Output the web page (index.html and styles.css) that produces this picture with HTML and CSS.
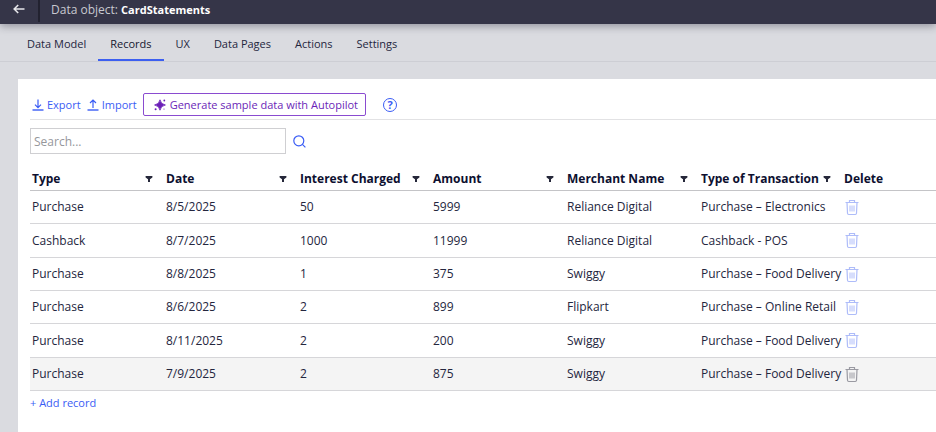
FILE: index.html
```html
<!DOCTYPE html>
<html lang="en">
<head>
<meta charset="utf-8">
<meta name="viewport" content="width=device-width, initial-scale=1">
<title>Data object: CardStatements</title>
<link rel="stylesheet" href="styles.css">
</head>
<body>
<svg class="sprite" aria-hidden="true">
  <symbol id="funnel" viewBox="0 0 8 8"><path d="M0.6 1h6.8v1.4L5 4.2V7H3V4.2L0.6 2.4z" fill="currentColor"/></symbol>
  <symbol id="trash" viewBox="0 0 14 17"><g fill="none" stroke="currentColor"><path d="M0.5 3.5h13M4.5 3V1.5h5V3M2 3.5l0.5 10.8q0.1 1.2 1.2 1.2h6.6q1.1 0 1.2-1.2L12 3.5" stroke-width="1.2"/><path d="M5 6.5v6M7 6.5v6M9 6.5v6" stroke-width="1"/></g></symbol>
</svg>

<header class="topbar">
  <button class="back" type="button" aria-label="Back">
    <svg width="12" height="10" viewBox="0 0 12 10"><path d="M11.5 5H1.2M5.2 1L1.2 5l4 4" fill="none" stroke="currentColor" stroke-width="1.6"/></svg>
  </button>
  <h1 class="title">Data object: <strong>CardStatements</strong></h1>
</header>

<nav class="tabs">
  <a class="tab" href="#model">Data Model</a>
  <a class="tab active" href="#records" aria-current="page">Records</a>
  <a class="tab" href="#ux">UX</a>
  <a class="tab" href="#pages">Data Pages</a>
  <a class="tab" href="#actions">Actions</a>
  <a class="tab" href="#settings">Settings</a>
</nav>

<main class="panel">
  <div class="toolbar">
    <button class="link" type="button"><svg width="12" height="12" viewBox="0 0 12 12" fill="none" stroke="currentColor"><path d="M6 0.5v8M3 5.6l3 3 3-3" stroke-width="1.2"/><path d="M0.5 11h11" stroke-width="1.4"/></svg>Export</button>
    <button class="link" type="button"><svg width="12" height="12" viewBox="0 0 12 12" fill="none" stroke="currentColor"><path d="M6 9V1M3 4l3-3 3 3" stroke-width="1.2"/><path d="M0.5 11h11" stroke-width="1.4"/></svg>Import</button>
    <button class="autopilot" type="button"><svg width="12" height="12" viewBox="0 0 12 12" fill="currentColor"><path d="M6 0.8Q6.7 5.3 11.4 6Q6.7 6.7 6 11.2Q5.3 6.7 0.6 6Q5.3 5.3 6 0.8z" stroke="currentColor" stroke-width="0.8"/><circle cx="10.3" cy="1.5" r="0.9"/><circle cx="1.6" cy="10.2" r="1"/><circle cx="10" cy="10" r="0.6"/></svg>Generate sample data with Autopilot</button>
    <button class="help" type="button" aria-label="Help">?</button>
  </div>

  <form class="search">
    <input class="search-box" type="text" placeholder="Search..." aria-label="Search">
    <button class="link" type="submit" aria-label="Search"><svg width="13" height="13" viewBox="0 0 13 13" fill="none" stroke="currentColor" stroke-width="1.2"><circle cx="5.8" cy="5.8" r="5"/><path d="M9.4 9.4l3 3"/></svg></button>
  </form>

  <table class="records">
    <colgroup><col class="std"><col class="std"><col class="mid"><col class="std"><col class="std"><col class="wide"><col></colgroup>
    <thead>
      <tr>
        <th scope="col"><div class="head">Type<svg class="funnel"><use href="#funnel"/></svg></div></th>
        <th scope="col"><div class="head">Date<svg class="funnel"><use href="#funnel"/></svg></div></th>
        <th scope="col"><div class="head">Interest Charged<svg class="funnel"><use href="#funnel"/></svg></div></th>
        <th scope="col"><div class="head">Amount<svg class="funnel"><use href="#funnel"/></svg></div></th>
        <th scope="col"><div class="head">Merchant Name<svg class="funnel"><use href="#funnel"/></svg></div></th>
        <th scope="col"><div class="head">Type of Transaction<svg class="funnel"><use href="#funnel"/></svg></div></th>
        <th scope="col">Delete</th>
      </tr>
    </thead>
    <tbody>
      <tr><td>Purchase</td><td>8/5/2025</td><td>50</td><td>5999</td><td>Reliance Digital</td><td>Purchase – Electronics</td><td><button class="delete" type="button" aria-label="Delete"><svg><use href="#trash"/></svg></button></td></tr>
      <tr><td>Cashback</td><td>8/7/2025</td><td>1000</td><td>11999</td><td>Reliance Digital</td><td>Cashback - POS</td><td><button class="delete" type="button" aria-label="Delete"><svg><use href="#trash"/></svg></button></td></tr>
      <tr><td>Purchase</td><td>8/8/2025</td><td>1</td><td>375</td><td>Swiggy</td><td>Purchase – Food Delivery</td><td><button class="delete" type="button" aria-label="Delete"><svg><use href="#trash"/></svg></button></td></tr>
      <tr><td>Purchase</td><td>8/6/2025</td><td>2</td><td>899</td><td>Flipkart</td><td>Purchase – Online Retail</td><td><button class="delete" type="button" aria-label="Delete"><svg><use href="#trash"/></svg></button></td></tr>
      <tr><td>Purchase</td><td>8/11/2025</td><td>2</td><td>200</td><td>Swiggy</td><td>Purchase – Food Delivery</td><td><button class="delete" type="button" aria-label="Delete"><svg><use href="#trash"/></svg></button></td></tr>
      <tr class="current"><td>Purchase</td><td>7/9/2025</td><td>2</td><td>875</td><td>Swiggy</td><td>Purchase – Food Delivery</td><td><button class="delete" type="button" aria-label="Delete"><svg><use href="#trash"/></svg></button></td></tr>
    </tbody>
  </table>
  <button class="link add" type="button">+ Add record</button>
</main>
</body>
</html>
```
FILE: styles.css
```css
* { box-sizing: border-box; }

body {
  margin: 0;
  min-height: 100vh;
  display: flex;
  flex-direction: column;
  background: #dadbe0;
  color: #24263e;
  font: 12px/16px "Open Sans", "Noto Sans", sans-serif;
  overflow-x: hidden;
}

button, input { font: inherit; color: inherit; }
button { padding: 0; border: 0; background: none; cursor: pointer; }
svg { display: block; flex: none; }
.sprite { position: absolute; width: 0; height: 0; }

.topbar {
  display: flex;
  height: 24px;
  background: #353548;
  color: #c8c9d0;
  box-shadow: 0 2px 8px rgba(30, 30, 50, 0.4);
}
.back {
  width: 40px;
  height: 22px;
  padding: 0 0 4px 13px;
  border-right: 2px solid #222230;
  color: #e6e6ea;
}
.title { margin: 0 0 0 11px; font-size: 12px; line-height: 19px; font-weight: 400; }
.title strong { color: #fff; font-size: 11px; }

.tabs {
  display: flex;
  height: 38px;
  padding: 0 15px;
  border-bottom: 1px solid #cdced4;
  font-size: 11px;
}
.tab {
  height: 37px;
  padding: 0 12px;
  border-bottom: 2px solid transparent;
  color: inherit;
  line-height: 40px;
  text-decoration: none;
}
.tab.active { border-color: #3c5ff0; color: #15172f; }

.panel {
  flex: 1;
  margin: 17px 0 0 18px;
  padding: 14px 0 0 12px;
  background: #fff;
}

.link { color: #3a5cf5; font-size: 11px; }
.toolbar {
  display: flex;
  align-items: center;
  gap: 6px;
  height: 27px;
  padding: 0 0 3px 2px;
  border-bottom: 1px solid #e2e2e4;
  font-size: 11px;
}
.toolbar .link { display: flex; align-items: center; gap: 3px; }
.autopilot {
  display: flex;
  align-items: center;
  gap: 4px;
  height: 23px;
  padding: 0 7px 0 10px;
  border: 1px solid #8a4bd0;
  border-radius: 2px;
  color: #6b1fb8;
}
.help {
  width: 14px;
  height: 14px;
  margin-left: 11px;
  border: 1px solid #3a5cf5;
  border-radius: 50%;
  color: #3a5cf5;
  line-height: 12px;
  font-weight: 700;
}

.search { display: flex; align-items: center; gap: 7px; margin-top: 8px; }
.search-box {
  width: 256px;
  height: 26px;
  padding: 0 3px;
  border: 1px solid #cfcfd2;
  border-radius: 0;
  background: #fff;
}
.search-box::placeholder { color: #96979c; opacity: 1; }

.records {
  width: 100%;
  margin-top: 12px;
  table-layout: fixed;
  border-collapse: collapse;
}
.std { width: 134px; }
.mid { width: 133px; }
.wide { width: 143px; }
.records th, .records td {
  padding: 1px 0 0 2px;
  border-bottom: 1px solid #d6d6d9;
  text-align: left;
  white-space: nowrap;
}
.records th { height: 24px; padding-top: 3px; border-color: #c4c4c7; color: #0d1030; }
.records td { height: 33px; }
.records tbody tr:nth-child(3n + 2) td { height: 34px; }
.head {
  display: flex;
  align-items: center;
  justify-content: space-between;
  padding-right: 11px;
}
.funnel { width: 8px; height: 8px; color: #26283a; }
.current { background: #f4f4f4; }
.delete { display: block; margin-left: 1px; color: #aebcf9; }
.delete svg { width: 14px; height: 17px; }
.current .delete { color: #9a9aa2; }
.add { display: block; margin-top: 4px; }
```
